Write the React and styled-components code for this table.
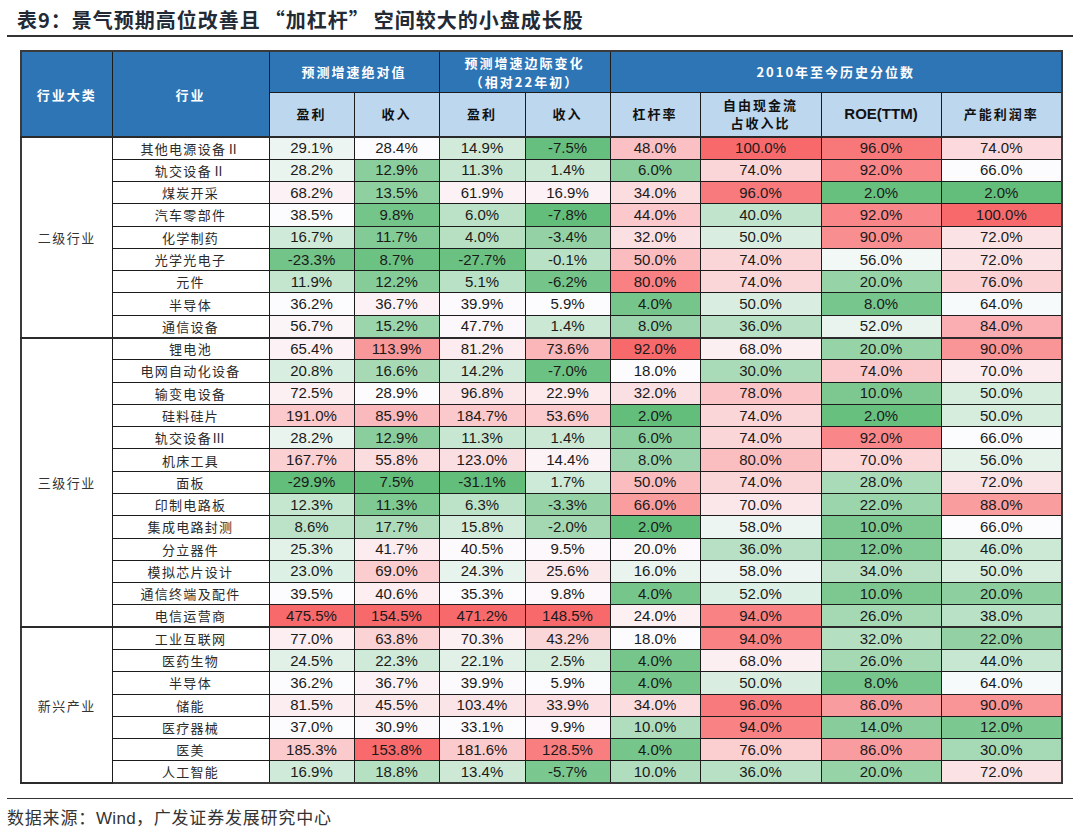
import React from 'react';
import styled, { createGlobalStyle } from 'styled-components';

const GlobalStyle = createGlobalStyle`
  body {
    margin: 0;
    background: #ffffff;
  }
`;

const CJK = `"Noto Sans CJK SC", "Liberation Sans", sans-serif`;
const NUM = `"Liberation Sans", Arial, sans-serif`;

// ---- data ----
const groups = [
  {
    name: '二级行业',
    rows: [
      ['其他电源设备Ⅱ', 29.1, 28.4, 14.9, -7.5, 48.0, 100.0, 96.0, 74.0],
      ['轨交设备Ⅱ', 28.2, 12.9, 11.3, 1.4, 6.0, 74.0, 92.0, 66.0],
      ['煤炭开采', 68.2, 13.5, 61.9, 16.9, 34.0, 96.0, 2.0, 2.0],
      ['汽车零部件', 38.5, 9.8, 6.0, -7.8, 44.0, 40.0, 92.0, 100.0],
      ['化学制药', 16.7, 11.7, 4.0, -3.4, 32.0, 50.0, 90.0, 72.0],
      ['光学光电子', -23.3, 8.7, -27.7, -0.1, 50.0, 74.0, 56.0, 72.0],
      ['元件', 11.9, 12.2, 5.1, -6.2, 80.0, 74.0, 20.0, 76.0],
      ['半导体', 36.2, 36.7, 39.9, 5.9, 4.0, 50.0, 8.0, 64.0],
      ['通信设备', 56.7, 15.2, 47.7, 1.4, 8.0, 36.0, 52.0, 84.0],
    ],
  },
  {
    name: '三级行业',
    rows: [
      ['锂电池', 65.4, 113.9, 81.2, 73.6, 92.0, 68.0, 20.0, 90.0],
      ['电网自动化设备', 20.8, 16.6, 14.2, -7.0, 18.0, 30.0, 74.0, 70.0],
      ['输变电设备', 72.5, 28.9, 96.8, 22.9, 32.0, 78.0, 10.0, 50.0],
      ['硅料硅片', 191.0, 85.9, 184.7, 53.6, 2.0, 74.0, 2.0, 50.0],
      ['轨交设备Ⅲ', 28.2, 12.9, 11.3, 1.4, 6.0, 74.0, 92.0, 66.0],
      ['机床工具', 167.7, 55.8, 123.0, 14.4, 8.0, 80.0, 70.0, 56.0],
      ['面板', -29.9, 7.5, -31.1, 1.7, 50.0, 74.0, 28.0, 72.0],
      ['印制电路板', 12.3, 11.3, 6.3, -3.3, 66.0, 70.0, 22.0, 88.0],
      ['集成电路封测', 8.6, 17.7, 15.8, -2.0, 2.0, 58.0, 10.0, 66.0],
      ['分立器件', 25.3, 41.7, 40.5, 9.5, 20.0, 36.0, 12.0, 46.0],
      ['模拟芯片设计', 23.0, 69.0, 24.3, 25.6, 16.0, 58.0, 34.0, 50.0],
      ['通信终端及配件', 39.5, 40.6, 35.3, 9.8, 4.0, 52.0, 10.0, 20.0],
      ['电信运营商', 475.5, 154.5, 471.2, 148.5, 24.0, 94.0, 26.0, 38.0],
    ],
  },
  {
    name: '新兴产业',
    rows: [
      ['工业互联网', 77.0, 63.8, 70.3, 43.2, 18.0, 94.0, 32.0, 22.0],
      ['医药生物', 24.5, 22.3, 22.1, 2.5, 4.0, 68.0, 26.0, 44.0],
      ['半导体', 36.2, 36.7, 39.9, 5.9, 4.0, 50.0, 8.0, 64.0],
      ['储能', 81.5, 45.5, 103.4, 33.9, 34.0, 96.0, 86.0, 90.0],
      ['医疗器械', 37.0, 30.9, 33.1, 9.9, 10.0, 94.0, 14.0, 12.0],
      ['医美', 185.3, 153.8, 181.6, 128.5, 4.0, 76.0, 86.0, 30.0],
      ['人工智能', 16.9, 18.8, 13.4, -5.7, 10.0, 36.0, 20.0, 72.0],
    ],
  },
];

const colWidths = [91, 157, 85, 85, 86, 85, 90, 121, 120, 121];

// colour scale: green (low) -> white (mid) -> red (high), like Excel
const GREEN = [99, 190, 123];
const WHITE = [252, 252, 255];
const RED = [248, 105, 107];

const allRows = groups.flatMap((g) => g.rows);

// two of the percentile columns were scaled over a wider range in the source
const overrides = {
  5: { min: 0, mid: 65, max: 100 },
  6: { min: 0, mid: 60, max: 100 },
};

const scales = Array.from({ length: 8 }, (_, c) => {
  if (overrides[c]) return overrides[c];
  const vals = allRows.map((r) => r[c + 1]).sort((a, b) => a - b);
  return { min: vals[0], mid: vals[Math.floor(vals.length / 2)], max: vals[vals.length - 1] };
});

const mix = (a, b, t) => {
  const k = Math.max(0, Math.min(1, t));
  return `rgb(${a.map((v, i) => Math.round(v + (b[i] - v) * k)).join(',')})`;
};

const cellColor = (v, c) => {
  const { min, mid, max } = scales[c];
  if (v <= mid) return mix(WHITE, GREEN, (mid - v) / (mid - min));
  return mix(WHITE, RED, (v - mid) / (max - mid));
};

// ---- styles ----
const Page = styled.div`
  width: 1080px;
  height: 833px;
  box-sizing: border-box;
  padding: 0 7px;
  overflow: hidden;
`;

const TitleBar = styled.div`
  height: 37px;
  box-sizing: border-box;
  padding: 3px 0 0 10px;
  display: flex;
  align-items: center;
  border-bottom: 2px solid #333;
`;

const Title = styled.h1`
  margin: 0;
  font-family: ${CJK};
  font-size: 20px;
  font-weight: 700;
  letter-spacing: 1px;
  color: #222a35;
`;

const Quote = styled.span`
  margin: 0 4px;
`;

const Table = styled.table`
  margin: 13px 0 0 13px;
  width: 1041px;
  table-layout: fixed;
  border-collapse: collapse;
  border: 2px solid #3a3a3a;
`;

const HeadCell = styled.th`
  background: #2e75b6;
  color: #ffffff;
  font-family: ${CJK};
  font-size: 13px;
  font-weight: 700;
  letter-spacing: 2px;
  line-height: 19px;
  text-align: center;
  padding: 0;
  border: 1px solid #1c1c1c;
`;

const SubHead = styled.th`
  background: #bdd7ee;
  color: #111111;
  font-family: ${(p) => (p.$latin ? NUM : CJK)};
  font-size: ${(p) => (p.$latin ? '15px' : '13px')};
  font-weight: 700;
  letter-spacing: ${(p) => (p.$latin ? '0' : '2px')};
  line-height: 18px;
  text-align: center;
  padding: 0;
  border: 1px solid #1c1c1c;
`;

const HeadRow = styled.tr`
  height: ${(p) => p.$h}px;
`;

const Row = styled.tr`
  height: 22.29px;

  & > td {
    border-top: ${(p) => (p.$first ? '2px solid #2a2a2a' : '1px solid #1c1c1c')};
  }
`;

const GroupCell = styled.td`
  font-family: ${CJK};
  font-size: 13px;
  font-weight: 400;
  letter-spacing: 1.5px;
  color: #333333;
  text-align: center;
  vertical-align: middle;
  padding: 0;
  border: 1px solid #1c1c1c;
  border-bottom: 2px solid #2a2a2a;
`;

const NameCell = styled.td`
  font-family: ${CJK};
  font-size: 13px;
  font-weight: 400;
  letter-spacing: 1.3px;
  color: #2a2a2a;
  text-align: center;
  padding: 0;
  border: 1px solid #1c1c1c;
`;

const ValueCell = styled.td`
  background: ${(p) => p.$bg};
  font-family: ${NUM};
  font-size: 15px;
  color: #1a1a1a;
  text-align: center;
  padding: 0;
  border: 1px solid #1c1c1c;
  line-height: 20px;
`;

const FootLine = styled.div`
  margin-top: 14px;
  border-top: 1.5px solid #333;
`;

const Source = styled.div`
  padding-top: 7px;
  font-family: ${CJK};
  font-size: 17px;
  letter-spacing: 0.8px;
  color: #333333;
  line-height: 22px;

  span {
    font-family: ${NUM};
    letter-spacing: 0.3px;
  }
`;

const fmt = (v) => `${v.toFixed(1)}%`;

export default function App() {
  return (
    <Page>
      <GlobalStyle />
      <TitleBar>
        <Title>
          表9：景气预期高位改善且<Quote>“加杠杆”</Quote>空间较大的小盘成长股
        </Title>
      </TitleBar>

      <Table>
        <colgroup>
          {colWidths.map((w, i) => (
            <col key={i} style={{ width: w }} />
          ))}
        </colgroup>
        <thead>
          <HeadRow $h={41}>
            <HeadCell rowSpan={2}>行业大类</HeadCell>
            <HeadCell rowSpan={2}>行业</HeadCell>
            <HeadCell colSpan={2}>预测增速绝对值</HeadCell>
            <HeadCell colSpan={2}>
              预测增速边际变化
              <br />
              （相对22年初）
            </HeadCell>
            <HeadCell colSpan={4}>2010年至今历史分位数</HeadCell>
          </HeadRow>
          <HeadRow $h={45}>
            <SubHead>盈利</SubHead>
            <SubHead>收入</SubHead>
            <SubHead>盈利</SubHead>
            <SubHead>收入</SubHead>
            <SubHead>杠杆率</SubHead>
            <SubHead>
              自由现金流
              <br />
              占收入比
            </SubHead>
            <SubHead $latin>ROE(TTM)</SubHead>
            <SubHead>产能利润率</SubHead>
          </HeadRow>
        </thead>
        <tbody>
          {groups.map((g) =>
            g.rows.map((r, i) => (
              <Row key={g.name + r[0]} $first={i === 0}>
                {i === 0 && <GroupCell rowSpan={g.rows.length}>{g.name}</GroupCell>}
                <NameCell>{r[0]}</NameCell>
                {r.slice(1).map((v, c) => (
                  <ValueCell key={c} $bg={cellColor(v, c)}>
                    {fmt(v)}
                  </ValueCell>
                ))}
              </Row>
            ))
          )}
        </tbody>
      </Table>

      <FootLine />
      <Source>
        数据来源：<span>Wind</span>，广发证券发展研究中心
      </Source>
    </Page>
  );
}
